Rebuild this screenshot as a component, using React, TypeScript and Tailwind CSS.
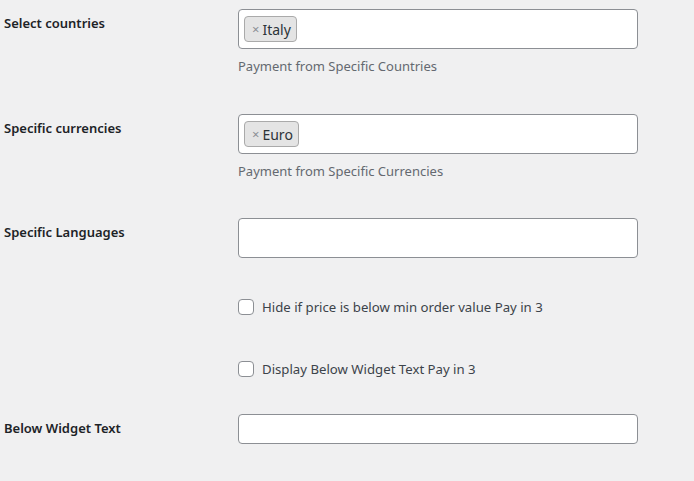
import React from "react";

/**
 * Payment settings form (WordPress-style form table)
 */

const font = { fontFamily: '"Noto Sans", "Open Sans", Arial, sans-serif' };

function Tag({ label }: { label: string }) {
  return (
    <span className="flex h-[26px] items-center gap-[3px] rounded-[4px] border border-[#aaaaaa] bg-[#e4e4e4] pl-[7px] pr-[5px] text-[14px] text-[#2c3338]">
      <span className="text-[13px] leading-none text-[#8c8f94]">×</span>
      <span>{label}</span>
    </span>
  );
}

function MultiSelect({ tag }: { tag?: string }) {
  return (
    <div className="flex h-[40px] w-[400px] items-center rounded-[4px] border border-[#8c8f94] bg-white px-[5px]">
      {tag && <Tag label={tag} />}
    </div>
  );
}

function Checkbox({ text }: { text: string }) {
  return (
    <label className="flex items-center gap-[8px] text-[13.2px] leading-[18px] text-[#3c434a]">
      <span className="block h-[16px] w-[16px] rounded-[4px] border border-[#8c8f94] bg-white" />
      {text}
    </label>
  );
}

export default function App() {
  return (
    <div className="h-[481px] w-[694px] overflow-hidden bg-[#f0f0f1] pl-[4px]" style={font}>
      {/* Select countries */}
      <div className="flex h-[105px]">
        <div className="w-[234px] shrink-0 pt-[14px] text-[13px] font-semibold leading-[18px] text-[#1d2327]">
          Select countries
        </div>
        <div className="pt-[9px]">
          <MultiSelect tag="Italy" />
          <p className="mt-[8px] text-[13px] leading-[19px] text-[#646970]">Payment from Specific Countries</p>
        </div>
      </div>

      {/* Specific currencies */}
      <div className="flex h-[104px]">
        <div className="w-[234px] shrink-0 pt-[14px] text-[13px] font-semibold leading-[18px] text-[#1d2327]">
          Specific currencies
        </div>
        <div className="pt-[9px]">
          <MultiSelect tag="Euro" />
          <p className="mt-[8px] text-[13px] leading-[19px] text-[#646970]">Payment from Specific Currencies</p>
        </div>
      </div>

      {/* Specific Languages */}
      <div className="flex h-[66px]">
        <div className="w-[234px] shrink-0 pt-[14px] text-[13px] font-semibold leading-[18px] text-[#1d2327]">
          Specific Languages
        </div>
        <div className="pt-[9px]">
          <MultiSelect />
        </div>
      </div>

      {/* Checkboxes */}
      <div className="flex h-[62px]">
        <div className="w-[234px] shrink-0" />
        <div className="pt-[23px]">
          <Checkbox text="Hide if price is below min order value Pay in 3" />
        </div>
      </div>
      <div className="flex h-[62px]">
        <div className="w-[234px] shrink-0" />
        <div className="pt-[23px]">
          <Checkbox text="Display Below Widget Text Pay in 3" />
        </div>
      </div>

      {/* Below Widget Text */}
      <div className="flex">
        <div className="w-[234px] shrink-0 pt-[20px] text-[13px] font-semibold leading-[18px] text-[#1d2327]">
          Below Widget Text
        </div>
        <div className="pt-[15px]">
          <input
            type="text"
            className="block h-[30px] w-[400px] rounded-[4px] border border-[#8c8f94] bg-white px-2 text-[14px] outline-none"
          />
        </div>
      </div>
    </div>
  );
}
